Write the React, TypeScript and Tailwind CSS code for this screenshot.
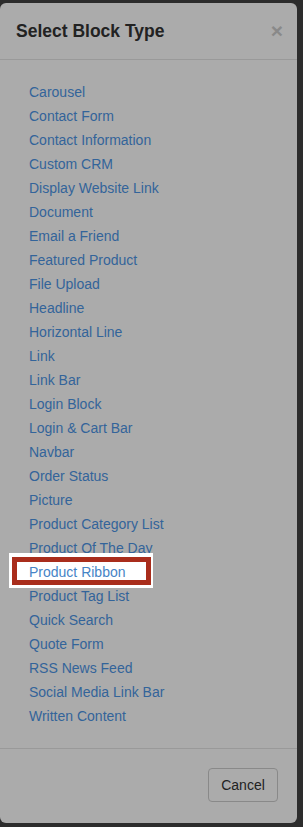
import React from "react";

const items = [
  "Carousel",
  "Contact Form",
  "Contact Information",
  "Custom CRM",
  "Display Website Link",
  "Document",
  "Email a Friend",
  "Featured Product",
  "File Upload",
  "Headline",
  "Horizontal Line",
  "Link",
  "Link Bar",
  "Login Block",
  "Login & Cart Bar",
  "Navbar",
  "Order Status",
  "Picture",
  "Product Category List",
  "Product Of The Day",
  "Product Ribbon",
  "Product Tag List",
  "Quick Search",
  "Quote Form",
  "RSS News Feed",
  "Social Media Link Bar",
  "Written Content",
];

export default function App() {
  return (
    <div
      className="w-[303px] h-[827px] bg-[#2c2c2c] pt-[3px] overflow-hidden"
      style={{ fontFamily: '"Liberation Sans", Arial, Helvetica, sans-serif' }}
    >
      <div className="w-[297px] h-[820px] bg-[#ababab] rounded-[6px] flex flex-col">
        {/* Header */}
        <div className="h-[57px] border-b border-[#999999] flex items-center justify-between pl-4 pr-[14px] shrink-0">
          <h4 className="text-[17.5px] font-bold text-[#222222] leading-none pt-[1px]">
            Select Block Type
          </h4>
          <span className="text-[21px] font-bold text-[#898989] leading-none -mt-[2px]">
            ×
          </span>
        </div>
        {/* Body */}
        <div className="py-5 pl-[29px] shrink-0">
          <ul className="flex flex-col">
            {items.map((it) =>
              it === "Product Ribbon" ? (
                <li key={it} className="relative h-6 flex items-center">
                  <div className="absolute left-[-20px] top-[-7px] w-[144px] h-[35px] bg-white pt-[4px] pl-[3px] pr-[2px] pb-[3px]">
                    <div className="w-full h-full border-[5px] border-[#a92d1c]" />
                  </div>
                  <span className="relative z-10 text-[14px] text-[#4684c6] leading-none">
                    {it}
                  </span>
                </li>
              ) : (
                <li key={it} className="h-6 flex items-center">
                  <span className="text-[14px] text-[#33649a] leading-none">{it}</span>
                </li>
              )
            )}
          </ul>
        </div>
        {/* Footer */}
        <div className="border-t border-[#999999] pt-[19px] pb-[20px] pr-[19px] flex justify-end shrink-0">
          <button className="w-[70px] h-[34px] rounded-[4px] border border-[#898989] text-[14px] text-[#222222] bg-[#ababab]">
            Cancel
          </button>
        </div>
      </div>
    </div>
  );
}
